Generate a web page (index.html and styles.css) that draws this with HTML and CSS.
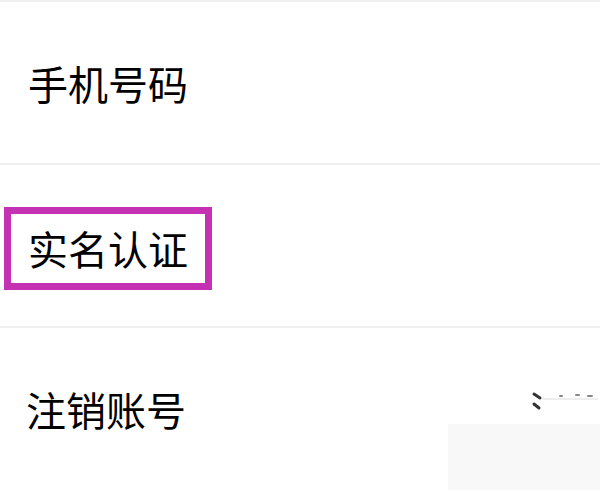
FILE: index.html
```html
<!DOCTYPE html>
<html>
<head>
  <meta charset="UTF-8">
  <title>账号与安全</title>
  <link rel="stylesheet" href="styles.css">
</head>
<body>
  <div class="list">
    <div class="row">
      <span class="label">手机号码</span>
    </div>
    <div class="row">
      <span class="label highlight">实名认证</span>
    </div>
    <div class="row">
      <span class="label">注销账号</span>
      <svg class="arrow" width="70" height="24" viewBox="0 0 70 24">
        <path d="M4 4 L10 8" stroke="#333" stroke-width="3" stroke-linecap="round"/>
        <path d="M4 14 L9 18" stroke="#333" stroke-width="3" stroke-linecap="round"/>
        <path d="M12 9 L68 9" stroke="#ddd" stroke-width="1"/>
        <path d="M30 6 L32 6 M46 5 L49 5 M58 6 L62 6" stroke="#888" stroke-width="2" stroke-linecap="round"/>
      </svg>
    </div>
  </div>
  <div class="mask"></div>
</body>
</html>
```

FILE: styles.css
```css
body {
  margin: 0;
  background: #fff;
  font-family: "Noto Sans CJK SC", "Noto Sans", sans-serif;
  color: #000;
  overflow: hidden;
}
.list {
  border-top: 2px solid #f0f0f0;
}
.row {
  height: 161px;
  display: flex;
  align-items: center;
  padding: 0 28px;
  border-bottom: 2px solid #f0f0f0;
  position: relative;
}
.row:nth-child(2) {
  padding-top: 6px;
  height: 155px;
}
.row:last-child {
  padding-left: 26px;
  border-bottom: none;
}
.label {
  font-size: 40px;
  line-height: 40px;
}
.highlight {
  margin-left: -24px;
  padding: 14px 17px 15px 17px;
  border: 7px solid #c431b3;
}
.arrow {
  position: absolute;
  right: 0;
  top: 62px;
}
.mask {
  position: absolute;
  left: 448px;
  top: 424px;
  width: 152px;
  height: 66px;
  background: #f8f8f8;
}
```
